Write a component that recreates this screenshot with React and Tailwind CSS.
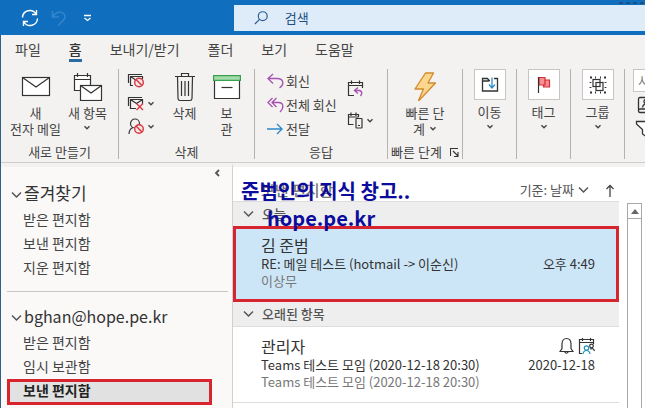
import React from "react";

const Chevron = ({ className = "" }) => (
  <svg className={className} width="8" height="6" viewBox="0 0 8 6" fill="none" stroke="#444" strokeWidth="1.4" aria-hidden="true">
    <path d="M1.5 1.2 4 3.7 6.5 1.2" />
  </svg>
);

const BigChevron = ({ className = "" }) => (
  <svg className={className} width="11" height="8" viewBox="0 0 11 8" fill="none" stroke="#555" strokeWidth="1.5" aria-hidden="true">
    <path d="M1 1.5 5.5 6 10 1.5" />
  </svg>
);

const MailIcon = () => (
  <svg width="30" height="32" viewBox="0 0 30 32" fill="#fff" stroke="#333" strokeWidth="1.2">
    <rect x="1.5" y="8.5" width="27" height="18" />
    <path d="M1.5 8.5 15 18 28.5 8.5" fill="none" />
  </svg>
);

const NewItemIcon = () => (
  <svg width="30" height="32" viewBox="0 0 30 32" fill="#fff" stroke="#333" strokeWidth="1.2">
    <path d="M8 21.5H1.5v-15h16v10" />
    <path d="M1.5 10.5h16M4.5 4v4M14.5 4v4" />
    <rect x="7.5" y="16.5" width="21" height="15" />
    <path d="M7.5 16.5 18 24l10.5-7.5" fill="none" />
  </svg>
);

const Prohibit = ({ cx, cy }) => (
  <g stroke="#d8373f" strokeWidth="1.4" fill="#f5e6e6">
    <circle cx={cx} cy={cy} r="4.3" />
    <path d={`M${cx - 3} ${cy - 3}l6 6`} />
  </g>
);

const IgnoreIcon = () => (
  <svg width="18" height="17" viewBox="0 0 18 17" fill="none" stroke="#333" strokeWidth="1.2">
    <path d="M1.5 11V2.5H15M6 13.5H3.5V4.5h12V7M3.5 4.5l6 4" />
    <Prohibit cx={12} cy={10.5} />
  </svg>
);

const CleanIcon = () => (
  <svg width="18" height="17" viewBox="0 0 18 17" fill="none" stroke="#333" strokeWidth="1.2">
    <path d="M1.5 11V2.5H15M9 13.5H3.5V4.5h12V9M3.5 4.5l6 4 6-4" />
    <path d="m9.5 8.5 6.5 6.5M16 8.5 9.5 15" stroke="#d8373f" strokeWidth="1.4" />
  </svg>
);

const JunkIcon = () => (
  <svg width="18" height="17" viewBox="0 0 18 17" fill="none" stroke="#333" strokeWidth="1.2">
    <circle cx="8" cy="5.5" r="4.5" />
    <path d="M2 16c0-3 1.500-5.500 4-6.500" />
    <Prohibit cx={12} cy={11} />
  </svg>
);

const TrashIcon = () => (
  <svg width="22" height="33" viewBox="0 0 22 33" fill="none" stroke="#333" strokeWidth="1.2">
    <path d="M1 7.500h20M7.500 7V4.500h7V7M3.500 7.500l.5 22q.2 2 2 2h10q1.800 0 2-2l.5-22M7.500 12v15M11 12v15M14.500 12v15" />
  </svg>
);

const ArchiveIcon = () => (
  <svg width="28" height="32" viewBox="0 0 28 32" fill="#fff" stroke="#333" strokeWidth="1.2">
    <path d="M1.500 11h25v18.500h-25z" />
    <path d="M.6 6.600h26.800v4.800H.6z" fill="#a6dbab" stroke="#37a24b" />
    <path d="M8.500 18.500h11" />
  </svg>
);

const ReplyIcon = () => (
  <svg width="17" height="16" viewBox="0 0 17 16" fill="none" stroke="#a652b0" strokeWidth="1.3">
    <path d="M6 1 1 5.500l5 5M1 5.500h9c7 0 7.500 6 2.500 9.500" />
  </svg>
);

const ReplyAllIcon = () => (
  <svg width="17" height="16" viewBox="0 0 17 16" fill="none" stroke="#a652b0" strokeWidth="1.3">
    <path d="M5.500 1 1 5.500l4.500 4.500M9.500 1 5 5.500 9.500 10M5 5.500h6.500c5.500 0 5.500 6 1.500 9.500" />
  </svg>
);

const ForwardIcon = () => (
  <svg width="17" height="16" viewBox="0 0 17 16" fill="none" stroke="#2e8bc8" strokeWidth="1.4">
    <path d="M0 8h15M10 3l5 5-5 5" />
  </svg>
);

const MeetingIcon = () => (
  <svg width="17" height="17" viewBox="0 0 17 17" fill="none" stroke="#333" strokeWidth="1.2">
    <path d="M7 15.500H1.500v-13h14V8M1.500 5.500h14M4.500.5v3.500M12.500.5v3.500" />
    <path d="M11 7.500 7.500 10.500l3.500 3M7.500 10.500h5q4 1.500 1 5.500" stroke="#a652b0" strokeWidth="1.4" />
  </svg>
);

const MoreReplyIcon = () => (
  <svg width="17" height="17" viewBox="0 0 17 17" fill="none" stroke="#333" strokeWidth="1.2">
    <path d="M6.500 12.500h-5v-10h10V5M1.500 5h10M4 .5V4M9 .5V4" />
    <rect x="9" y="6.500" width="6" height="9.500" rx=".5" />
    <path d="M11 13.500h2" />
  </svg>
);

const BoltIcon = () => (
  <svg width="24" height="32" viewBox="0 0 24 32" fill="#fcd68c" stroke="#d18a2c" strokeWidth="1.3" strokeLinejoin="round">
    <path d="M12.500 4h8L15 14h7.500L6 31.500h-.5L10.500 20H2z" />
  </svg>
);

const MoveIcon = () => (
  <svg width="18" height="18" viewBox="0 0 18 18" fill="none" stroke="#333" strokeWidth="1.3">
    <path d="M9 4.500H8L6.500 2.500h-5v12.500h15V2.500H13M1.500 5H8" />
    <path d="M11 1.500v10M8 8.500l3 3.500 3-3.500" stroke="#2e8bc8" />
  </svg>
);

const FlagIcon = () => (
  <svg width="18" height="18" viewBox="0 0 18 18" fill="#f78f92" stroke="#d22f35" strokeWidth="1.2">
    <path d="M4 1.500h6v2.500h4.500v7H8.500V9H4z" />
    <path d="M8.500 9h1.500V4" fill="none" />
    <path d="M3.500 1v16" stroke="#333" />
  </svg>
);

const GroupIcon = () => (
  <svg width="18" height="18" viewBox="0 0 18 18" fill="none" stroke="#333" strokeWidth="1.2">
    <rect x="4" y="3.500" width="7" height="7" />
    <rect x="7" y="6.500" width="7" height="8" />
    <path d="M1 1.500h2M15 1.500h2M1 16.500h2M15 16.500h2M1.500 6v1M1.500 11v1M16.500 6v1M16.500 11v1M6 1.500h1M11 1.500h1M6 16.500h1M11 16.500h1" strokeWidth="1.8" />
  </svg>
);

const AddressIcon = () => (
  <svg width="17" height="18" viewBox="0 0 17 18" fill="none" stroke="#333" strokeWidth="1.3">
    <path d="M3 1.500h13v15H3q-1.500 0-1.500-2V3Q1.500 1.500 3 1.500M1.500 14q0-1 1.500-1h13" />
    <circle cx="9" cy="5.500" r="2" />
    <path d="M5.500 11.500Q6 8 9 8t3.500 3.500" />
  </svg>
);

const FunnelIcon = () => (
  <svg width="18" height="18" viewBox="0 0 18 18" fill="#fff" stroke="#333" strokeWidth="1.3">
    <path d="M1.500 1.500h15v2.500L11 9.500v7L7.500 14V9.500L1.500 4z" />
  </svg>
);

const RibbonGroup = ({ label, width, children, launcher }) => (
  <section className={`flex h-[90px] shrink-0 flex-col border-r border-[#b5b3b1] ${width}`}>
    <div className="flex flex-1 justify-center">{children}</div>
    <div className="flex h-[14px] items-center justify-center leading-3">
      <span>{label}</span>
      {launcher && (
        <button type="button" aria-label={`${label} 옵션`} className="ml-2">
          <svg width="9" height="9" viewBox="0 0 9 9" fill="none" stroke="#333" strokeWidth="1.1">
            <path d="M.5 8V.5H8M3 3l5 5M8 4v4.500H4" />
          </svg>
        </button>
      )}
    </div>
  </section>
);

const BigButton = ({ icon, width, children }) => (
  <button type="button" className={`flex shrink-0 flex-col items-center ${width}`}>
    <span className="flex h-9 items-start">{icon}</span>
    <span className="flex flex-col items-center whitespace-nowrap leading-4">{children}</span>
  </button>
);

const BoxedButton = ({ icon, label, width }) => (
  <RibbonGroup label="" width={width}>
    <button type="button" className="flex flex-col items-center">
      <span className="flex h-[31px] w-8 items-center justify-center border border-[#c8c6c4] bg-white">{icon}</span>
      <span className="mt-1 leading-4">{label}</span>
      <Chevron className="mt-1" />
    </button>
  </RibbonGroup>
);

const SplitIcon = ({ icon, label, menu }) => (
  <button type="button" aria-label={label} className="flex h-[23px] items-center gap-0.5">
    {icon}
    {menu && <Chevron />}
  </button>
);

const tabs = ["파일", "홈", "보내기/받기", "폴더", "보기", "도움말"];

const FolderGroup = ({ title, titleSize, folders, selected }) => (
  <section>
    <h2>
      <button type="button" className={`flex h-7 items-center text-[#333] ${titleSize}`}>
        <BigChevron className="mr-0.5 mt-1" />
        {title}
      </button>
    </h2>
    <ul className="text-sm text-[#444]">
      {folders.map((name) => (
        <li key={name}>
          {name === selected ? (
            <a href="#sent" aria-current="page" className="-ml-1 mr-4 mt-px flex h-[26px] items-center bg-[#e1e1e1] pb-1 pl-4 font-bold text-[#222] ring-3 ring-inset ring-[#d6252e]">
              {name}
            </a>
          ) : (
            <a href="#folder" className="flex h-6 items-center pl-3">{name}</a>
          )}
        </li>
      ))}
    </ul>
  </section>
);

const DateHeading = ({ children }) => (
  <h3 className="flex h-6 items-center gap-2 bg-[#eeeeee] pl-2.5 text-[13px] font-medium text-[#555]">
    <BigChevron />
    {children}
  </h3>
);

const Message = ({ from, subject, preview, time, icons, className }) => (
  <article className={`flex justify-between pl-7 pr-6 text-[13px] ${className}`}>
    <div className="whitespace-nowrap leading-[17px]">
      <h4 className="text-base leading-5 text-[#333]">{from}</h4>
      <p className="text-[#333]">{subject}</p>
      <p className="text-[#777]">{preview}</p>
    </div>
    <div className="flex flex-col items-end leading-[17px] text-[#333]">
      <span className="flex h-5 items-center gap-1">{icons}</span>
      <time>{time}</time>
    </div>
  </article>
);

export default function App() {
  return (
    <div className="flex h-screen flex-col overflow-hidden bg-white font-['Noto_Sans_CJK_KR','Noto_Sans',sans-serif] text-[13px] text-[#444]">
      <header className="relative flex h-[35px] shrink-0 items-center bg-[#106ebe]">
        <div className="flex w-[234px] shrink-0 items-center pl-[21px]">
          <button type="button" aria-label="새로 고침">
            <svg width="18" height="18" viewBox="0 0 18 18" fill="none" stroke="#fff" strokeWidth="1.4">
              <path d="M1.500 8.500A7.300 7.300 0 0 1 15 5M16.500 9.500A7.300 7.300 0 0 1 3 13M15.500 1v4.500H11M2.500 17v-4.500H7" />
            </svg>
          </button>
          <button type="button" aria-label="실행 취소" className="ml-3">
            <svg width="16" height="18" viewBox="0 0 16 18" fill="none" stroke="#3585cc" strokeWidth="1.5">
              <path d="M1.500 2v6H8M1.500 8C4 3.500 9 1.500 12.500 4.500c4 4-.5 7-5.500 12" />
            </svg>
          </button>
          <button type="button" aria-label="빠른 실행 도구 모음" className="ml-4">
            <svg width="9" height="8" viewBox="0 0 9 8" fill="none" stroke="#fff" strokeWidth="1.3">
              <path d="M1 1.500h7M1.500 4l3 2.500L7.500 4" />
            </svg>
          </button>
        </div>
        <label className="flex h-[26px] flex-1 items-center bg-[#deecf9] pl-5">
          <svg width="16" height="16" viewBox="0 0 16 16" fill="none" stroke="#2b5f93" strokeWidth="1.3">
            <circle cx="9.500" cy="6" r="4.800" />
            <path d="M6 9.500 1 14.500" />
          </svg>
          <input type="search" aria-label="검색" placeholder="검색" className="ml-4 w-full bg-transparent text-[13px] outline-none placeholder:text-[#205080]" />
        </label>
        <svg className="absolute right-0 top-0" width="28" height="5" viewBox="0 0 28 5" stroke="#1c5186" strokeWidth="2" aria-hidden="true">
          <path d="M2 3h26" strokeDasharray="4 3" />
        </svg>
      </header>

      <div className="flex min-h-0 flex-1 flex-col border-l border-[#2f6087]">
        <nav className="flex h-[29px] shrink-0 gap-7 bg-[#f3f2f1] pl-3.5 text-sm">
          {tabs.map((tab) => (
            <button
              key={tab}
              type="button"
              className={tab === "홈" ? "mb-0.5 border-b-3 border-[#2b6ca3] pt-[3px] font-medium text-[#333]" : "mb-0.5 border-b-3 border-transparent pt-[3px]"}
            >
              {tab}
            </button>
          ))}
        </nav>

        <div className="flex h-[99px] shrink-0 overflow-hidden border-b border-[#cfcdcb] bg-[#f3f2f1] pt-[5px]">
          <RibbonGroup label="새로 만들기" width="w-[118px]">
            <BigButton icon={<MailIcon />} width="w-14">
              <span>새</span>
              <span>전자 메일</span>
            </BigButton>
            <BigButton icon={<NewItemIcon />} width="w-12">
              <span>새 항목</span>
              <Chevron className="mt-1" />
            </BigButton>
          </RibbonGroup>
          <RibbonGroup label="삭제" width="w-[136px]">
            <div className="flex w-9 flex-col">
              <SplitIcon icon={<IgnoreIcon />} label="무시" />
              <SplitIcon icon={<CleanIcon />} label="정리" menu />
              <SplitIcon icon={<JunkIcon />} label="정크" menu />
            </div>
            <BigButton icon={<TrashIcon />} width="w-11">
              <span>삭제</span>
            </BigButton>
            <BigButton icon={<ArchiveIcon />} width="w-10">
              <span>보</span>
              <span>관</span>
            </BigButton>
          </RibbonGroup>
          <RibbonGroup label="응답" width="w-[133px]">
            <div className="flex w-20 flex-col whitespace-nowrap">
              <button type="button" className="flex h-6 items-center gap-0.5"><ReplyIcon />회신</button>
              <button type="button" className="flex h-6 items-center gap-0.5"><ReplyAllIcon />전체 회신</button>
              <button type="button" className="flex h-6 items-center gap-0.5"><ForwardIcon />전달</button>
            </div>
            <div className="flex w-7 flex-col gap-[9px] pt-2">
              <SplitIcon icon={<MeetingIcon />} label="모임" />
              <SplitIcon icon={<MoreReplyIcon />} label="기타" menu />
            </div>
          </RibbonGroup>
          <RibbonGroup label="빠른 단계" width="w-[75px]" launcher>
            <BigButton icon={<BoltIcon />} width="w-14">
              <span>빠른 단</span>
              <span className="flex items-center gap-1">계 <Chevron /></span>
            </BigButton>
          </RibbonGroup>
          <BoxedButton icon={<MoveIcon />} label="이동" width="w-[54px]" />
          <BoxedButton icon={<FlagIcon />} label="태그" width="w-[54px]" />
          <BoxedButton icon={<GroupIcon />} label="그룹" width="w-[54px]" />
          <div className="flex min-w-0 flex-1 flex-col gap-1 pl-2">
            <input type="text" aria-label="사람 찾기" placeholder="사람 찾기" className="h-[23px] w-28 shrink-0 border border-[#c8c6c4] bg-white pl-1 placeholder:text-[#777]" />
            <button type="button" aria-label="주소록" className="ml-1 w-5"><AddressIcon /></button>
            <button type="button" aria-label="필터" className="ml-0.5 mt-0.5 w-5"><FunnelIcon /></button>
          </div>
        </div>

        <div className="flex min-h-0 flex-1">
          <aside className="w-[232px] shrink-0 border-r border-t-4 border-r-[#d2d0ce] border-t-[#f3f2f1] bg-[#faf9f8] pl-2.5">
            <div className="flex h-3 items-center justify-end pr-3">
              <button type="button" aria-label="폴더 창 최소화">
                <svg width="6" height="8" viewBox="0 0 6 8" fill="none" stroke="#555" strokeWidth="1.8">
                  <path d="M5 1 2 4l3 3" />
                </svg>
              </button>
            </div>
            <div className="pr-1">
              <FolderGroup title="즐겨찾기" titleSize="text-[17px]" folders={["받은 편지함", "보낸 편지함", "지운 편지함"]} />
              <hr className="-ml-1 mb-[10px] mt-3 border-[#c8c6c4]" />
              <FolderGroup title="bghan@hope.pe.kr" titleSize="text-base" folders={["받은 편지함", "임시 보관함", "보낸 편지함"]} selected="보낸 편지함" />
            </div>
          </aside>

          <main className="flex min-w-0 flex-1 border-t-4 border-[#f3f2f1]">
            <div className="relative min-w-0 flex-1">
              <div className="flex h-[35px] items-center justify-between border-b border-[#dddddd] pl-7 pr-1 pt-3">
                <h2 className="text-[15px] font-medium text-[#777]">보낸 편지함</h2>
                <div className="flex items-center text-[#555]">
                  <button type="button" className="flex items-center gap-1">기준: 날짜 <BigChevron /></button>
                  <button type="button" aria-label="정렬 순서" className="ml-4">
                    <svg width="10" height="13" viewBox="0 0 10 13" fill="none" stroke="#444" strokeWidth="1.3">
                      <path d="M5 13V1.500M1.500 5 5 1.500 8.500 5" />
                    </svg>
                  </button>
                </div>
              </div>
              <DateHeading>오늘</DateHeading>
              <Message
                className="h-[76px] bg-[#cde6f7] pt-[9px] ring-3 ring-inset ring-[#d6252e]"
                from="김 준범"
                subject="RE: 메일 테스트 (hotmail -> 이순신)"
                preview="이상무"
                time="오후 4:49"
              />
              <DateHeading>오래된 항목</DateHeading>
              <Message
                className="h-[77px] border-y border-[#dddddd] pt-[9px]"
                from="관리자"
                subject="Teams 테스트 모임 (2020-12-18 20:30)"
                preview="Teams 테스트 모임 (2020-12-18 20:30)"
                time="2020-12-18"
                icons={
                  <>
                    <svg width="15" height="18" viewBox="0 0 15 18" fill="none" stroke="#333" strokeWidth="1.2">
                      <path d="M1 14.500h13l-2-3V7C12 3.500 10 1.500 7.500 1.500S3 3.500 3 7v4.500zM5.500 14.500q2 3.500 4 0" />
                    </svg>
                    <svg width="17" height="18" viewBox="0 0 17 18" fill="none" stroke="#333" strokeWidth="1.2">
                      <path d="M4 16.500H1.500v-14h14V7M1.500 5.500h14M4.500 1v3M12.500 1v3" />
                      <circle cx="13.500" cy="9" r="1.800" />
                      <path d="M12 12q3.500-1.500 4.500 2" />
                      <g stroke="#1f94b8">
                        <circle cx="8.500" cy="11" r="2.200" />
                        <path d="M5 17q.5-3.500 3.500-3.500T12 17" />
                      </g>
                    </svg>
                  </>
                }
              />
              <p className="absolute left-2 top-2.5 whitespace-nowrap text-[20px] font-bold leading-[27px] text-[#0c0c9c]">
                준범인의 지식 창고..
                <span className="block pl-[26px]">hope.pe.kr</span>
              </p>
            </div>
            <div className="w-[26px] shrink-0 pl-2 pr-[3px] pt-9">
              <div className="h-full border-x border-t border-[#a8a8a8]">
                <button type="button" aria-label="위로 스크롤" className="flex h-[15px] w-full items-center justify-center border-b border-[#a8a8a8]">
                  <svg width="8" height="5" viewBox="0 0 8 5" fill="#666"><path d="M0 5 4 0l4 5z" /></svg>
                </button>
              </div>
            </div>
          </main>
        </div>
      </div>
    </div>
  );
}
